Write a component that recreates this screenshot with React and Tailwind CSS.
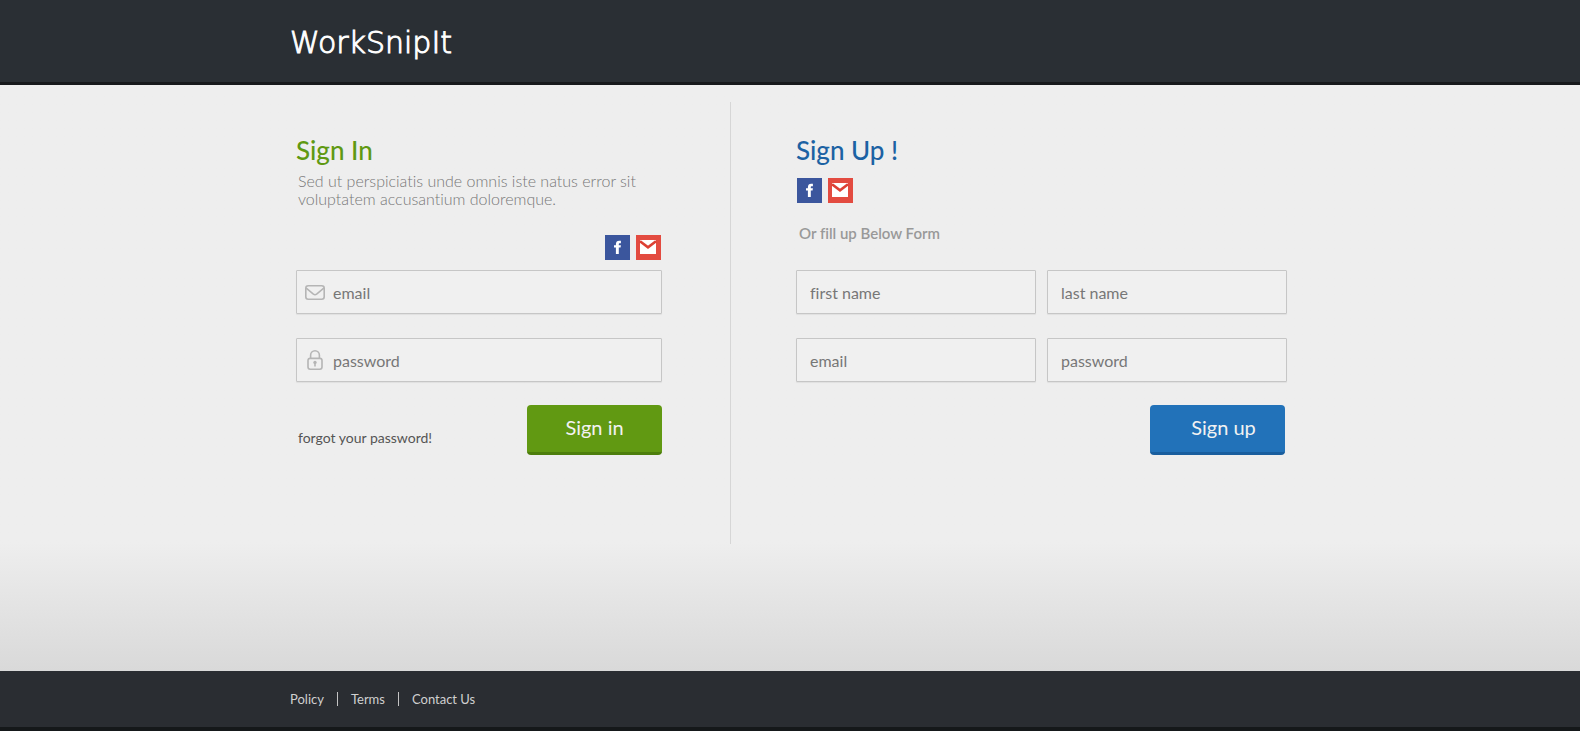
import React from "react";

function FacebookIcon() {
  return (
    <a href="#facebook" aria-label="Facebook" className="block size-[25px]">
      <svg viewBox="0 0 25 25" className="block size-full">
        <rect width="25" height="25" fill="#3b569d" />
        <path d="M10.9 19V12.6H9V10.2H10.9V9.2C10.9 6.8 12.2 5.7 14.2 5.7H15.9V8.2H14.8C14 8.2 13.8 8.6 13.8 9.3V10.2H15.9L15.6 12.6H13.8V19Z" fill="#fff" />
      </svg>
    </a>
  );
}

function MailIcon() {
  return (
    <a href="#gmail" aria-label="Gmail" className="block size-[25px]">
      <svg viewBox="0 0 25 25" className="block size-full">
        <rect width="25" height="25" fill="#e34b40" />
        <rect x="4" y="5" width="16" height="14" fill="#fff" />
        <path d="M4 6.2L12 12.4L20 6.2" fill="none" stroke="#dd4034" strokeWidth="2.6" />
      </svg>
    </a>
  );
}

function Social({ className }) {
  return (
    <div className={"flex gap-[6px] px-px " + className}>
      <FacebookIcon />
      <MailIcon />
    </div>
  );
}

function EnvelopeIcon() {
  return (
    <svg viewBox="0 0 20 15" className="h-[15px] w-5 shrink-0" fill="none" stroke="#b5b5b5" strokeWidth="1.6">
      <rect x="0.8" y="0.8" width="18.4" height="13.4" rx="2.4" />
      <path d="M1.2 3.2L8.4 9.2Q10 10.4 11.6 9.2L18.8 3.2" />
    </svg>
  );
}

function LockIcon() {
  return (
    <svg viewBox="0 0 20 20" className="size-5 shrink-0" fill="none" stroke="#b5b5b5" strokeWidth="1.6">
      <rect x="3" y="8.4" width="14" height="10.8" rx="2.2" />
      <path d="M5.6 8.4V5.2A4.4 4.4 0 0 1 14.4 5.2V8.4" />
      <circle cx="10" cy="12.4" r="1.7" fill="#b5b5b5" stroke="none" />
      <path d="M10 12.5V16.6" />
    </svg>
  );
}

function Field({ label, type = "text", icon }) {
  return (
    <label
      className={
        "flex h-11 min-w-0 items-center rounded-[1px] border border-[#c6c6c6] bg-[#f0f0f0] shadow-[0_1px_1px_rgba(0,0,0,0.06)] " +
        (icon ? "gap-2 pl-2" : "pl-[13px]")
      }
    >
      {icon}
      <input
        type={type}
        aria-label={label}
        placeholder={label}
        className="h-full w-full min-w-0 bg-transparent text-[16px] text-[#666] outline-none placeholder:text-[#777]"
      />
    </label>
  );
}

const button =
  "h-[50px] w-[135px] rounded-[4px] border-b-[3px] pb-1 text-[20px] leading-6 text-[#f2f2f2]";

export default function App() {
  return (
    <div className="flex min-h-screen flex-col bg-[#eeeeee] font-['Lato','Open_Sans',sans-serif] [font-variant-ligatures:none]">
      <header className="border-b-[3px] border-[#17191c] bg-[#2a2f34]">
        <div className="mx-auto flex h-[82px] max-w-[1000px] items-center pt-1">
          <a
            href="#home"
            className="font-['DejaVu_Sans_Light','DejaVu_Sans',sans-serif] text-[30px] font-extralight leading-8 text-white [-webkit-text-stroke:1px_white]"
          >
            WorkSnipIt
          </a>
        </div>
      </header>

      <main className="flex-1 bg-linear-to-b from-[#eeeeee] from-78% to-[#d9d9d9] pt-[17px] pb-8">
        <div className="mx-auto flex max-w-[1000px] pr-[3px] pl-[6px]">
          <section className="min-h-[442px] w-[435px] border-r border-[#d6d6d6] pt-7 pr-[68px]">
            <h1 className="text-[26px] font-medium leading-10 text-[#5f9912]">Sign In</h1>
            <p className="mt-[2px] pl-[2px] text-[16px] font-light leading-[18px] text-[#777]">
              Sed ut perspiciatis unde omnis iste natus error sit voluptatem accusantium doloremque.
            </p>
            <Social className="mt-[27px] justify-end" />
            <form className="mt-[10px]">
              <div className="grid gap-6">
                <Field label="email" type="email" icon={<EnvelopeIcon />} />
                <Field label="password" type="password" icon={<LockIcon />} />
              </div>
              <div className="mt-[23px] flex items-end justify-between">
                <a href="#forgot" className="mb-[7px] pl-[2px] text-[14px] leading-5 text-[#555]">
                  forgot your password!
                </a>
                <button type="button" className={button + " border-[#4d7e0c] bg-[#619912]"}>
                  Sign in
                </button>
              </div>
            </form>
          </section>

          <section className="min-w-0 flex-1 pt-7 pl-[65px]">
            <h2 className="text-[26px] font-medium leading-10 text-[#1c62a3]">Sign Up !</h2>
            <Social className="mt-2" />
            <p className="mt-5 pl-[3px] text-[15px] font-semibold leading-5 text-[#999]">Or fill up Below Form</p>
            <form className="mt-[27px]">
              <div className="grid grid-cols-2 gap-x-[11px] gap-y-6">
                <Field label="first name" />
                <Field label="last name" />
                <Field label="email" type="email" />
                <Field label="password" type="password" />
              </div>
              <div className="mt-[23px] flex justify-end pr-[2px]">
                <button type="button" className={button + " border-[#195e9e] bg-[#2272b9] pl-3"}>
                  Sign up
                </button>
              </div>
            </form>
          </section>
        </div>
      </main>

      <footer className="border-b-4 border-[#15181a] bg-[#2a2d32]">
        <nav className="mx-auto flex h-14 max-w-[1000px] items-center text-[13px] leading-[14px] text-[#d0d0d0]">
          <a href="#policy" className="pr-[13px]">Policy</a>
          <a href="#terms" className="border-x border-[#c4c4c4] px-[13px]">Terms</a>
          <a href="#contact" className="pl-[13px]">Contact Us</a>
        </nav>
      </footer>
    </div>
  );
}
